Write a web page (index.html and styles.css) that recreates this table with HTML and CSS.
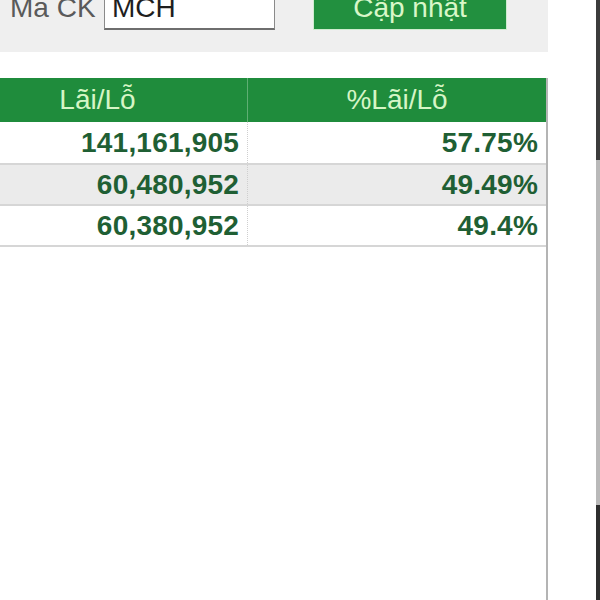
FILE: index.html
```html
<!DOCTYPE html>
<html lang="vi">
<head>
<meta charset="utf-8">
<title>Lãi/Lỗ</title>
<link rel="stylesheet" href="styles.css">
</head>
<body>
<div class="page">
  <div class="main">
    <div class="toolbar">
      <div class="toolbar-row">
        <span class="label">Mã CK</span>
        <div class="input">MCH</div>
        <div class="button">Cập nhật</div>
      </div>
    </div>
    <div class="spacer"></div>
    <div class="table">
      <div class="row head">
        <div class="cell c1">Lãi/Lỗ</div>
        <div class="cell c2">%Lãi/Lỗ</div>
      </div>
      <div class="row r1">
        <div class="cell c1">141,161,905</div>
        <div class="cell c2">57.75%</div>
      </div>
      <div class="row r2 alt">
        <div class="cell c1">60,480,952</div>
        <div class="cell c2">49.49%</div>
      </div>
      <div class="row r3">
        <div class="cell c1">60,380,952</div>
        <div class="cell c2">49.4%</div>
      </div>
    </div>
  </div>
  <div class="gutter"></div>
  <div class="edge">
    <div class="seg dark top"></div>
    <div class="seg light"></div>
    <div class="seg dark bottom"></div>
  </div>
</div>
</body>
</html>
```

FILE: styles.css
```css
html, body {
  margin: 0;
  padding: 0;
  background: #ffffff;
}
body {
  font-family: "Liberation Sans", Arial, sans-serif;
  width: 600px;
  height: 600px;
  overflow: hidden;
}
.page {
  display: flex;
  height: 600px;
}
.main {
  width: 548px;
  display: flex;
  flex-direction: column;
}
.toolbar {
  height: 52px;
  background: #efefef;
  overflow: hidden;
  flex: none;
}
.toolbar-row {
  display: flex;
  align-items: center;
  height: 44px;
  margin-top: -14px;
}
.label {
  margin-left: 10px;
  width: 94px;
  font-size: 28px;
  color: #5a5a5a;
}
.input {
  box-sizing: border-box;
  width: 171px;
  height: 44px;
  background: #ffffff;
  border: 1px solid #8a8a8a;
  border-bottom: 2px solid #6e6e6e;
  font-size: 28px;
  line-height: 42px;
  padding-left: 7px;
  color: #1e1e1e;
}
.button {
  box-sizing: border-box;
  margin-left: 38px;
  width: 194px;
  height: 44px;
  background: #22903f;
  border: 1px solid #cfeccf;
  color: #d8f7c8;
  font-size: 28px;
  line-height: 42px;
  text-align: center;
}
.spacer {
  height: 26px;
  flex: none;
}
.table {
  flex: 1;
  border-right: 2px solid #b4b4b4;
}
.row {
  display: grid;
  grid-template-columns: 248px 298px;
  box-sizing: border-box;
  border-bottom: 2px solid #d6d6d6;
}
.row.head {
  height: 44px;
  background: #1f8c3c;
  border-bottom: none;
}
.row.r1 { height: 43px; }
.row.r2 { height: 41px; }
.row.r3 { height: 41px; }
.row.alt { background: #ebebeb; }
.cell {
  display: flex;
  align-items: center;
  justify-content: flex-end;
  padding-right: 8px;
  font-size: 28px;
  font-weight: bold;
  color: #1f5f34;
  letter-spacing: 0.2px;
}
.row .c1 {
  border-right: 1px dotted #cfcfcf;
}
.head .cell {
  justify-content: center;
  font-weight: normal;
  color: #d6f5c6;
  padding-right: 0;
  letter-spacing: 0;
}
.head .c1 {
  padding-right: 52px;
  border-right: 1px solid #5fae73;
}
.gutter {
  flex: 1;
}
.edge {
  width: 4px;
  display: flex;
  flex-direction: column;
}
.seg.dark { background: #3c3c3c; }
.seg.top { height: 160px; }
.seg.light { height: 345px; background: #b9b9b9; }
.seg.bottom { flex: 1; background: #2e2e2e; }
```
